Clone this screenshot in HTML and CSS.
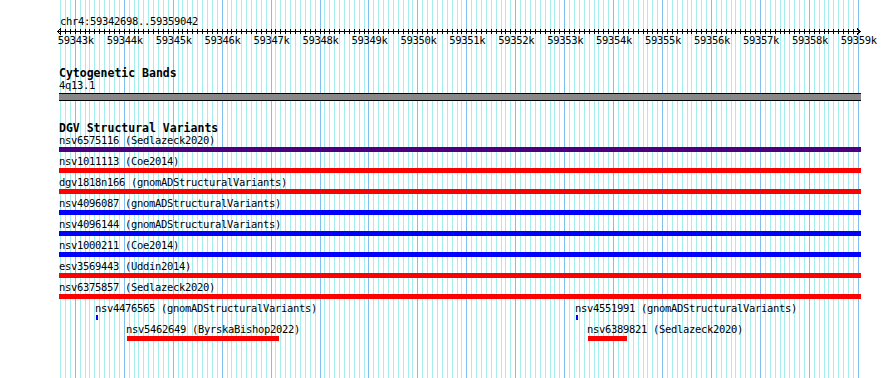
FILE: index.html
```html
<!DOCTYPE html>
<html lang="en">
<head>
<meta charset="utf-8">
<title>chr4:59342698..59359042</title>
<link rel="stylesheet" href="styles.css">
</head>
<body>
<div class="view">
  <svg class="grid" width="890" height="378" viewBox="0 0 890 378" aria-hidden="true">
    <defs>
      <path id="kb" d="M4.894 0V378M9.788 0V378M14.682 0V378M19.576 0V378M24.47 0V378M29.364 0V378M34.258 0V378M39.152 0V378M44.046 0V378"/>
    </defs>
    <g class="minor">
      <path d="M60.62 0V378M65.51 0V378M70.41 0V378"/>
      <use href="#kb" x="75.3"/>
      <use href="#kb" x="124.24"/>
      <use href="#kb" x="173.18"/>
      <use href="#kb" x="222.12"/>
      <use href="#kb" x="271.06"/>
      <use href="#kb" x="320"/>
      <use href="#kb" x="368.94"/>
      <use href="#kb" x="417.88"/>
      <use href="#kb" x="466.82"/>
      <use href="#kb" x="515.76"/>
      <use href="#kb" x="564.7"/>
      <use href="#kb" x="613.64"/>
      <use href="#kb" x="662.58"/>
      <use href="#kb" x="711.52"/>
      <use href="#kb" x="760.46"/>
      <use href="#kb" x="809.4"/>
    </g>
    <path class="major" d="M75.3 0V378M124.24 0V378M173.18 0V378M222.12 0V378M271.06 0V378M320 0V378M368.94 0V378M417.88 0V378M466.82 0V378M515.76 0V378M564.7 0V378M613.64 0V378M662.58 0V378M711.52 0V378M760.46 0V378M809.4 0V378M858.34 0V378"/>
  </svg>

  <svg class="ruler" width="890" height="50" viewBox="0 0 890 50">
    <defs>
      <path id="kbt" d="M0 29V34M4.894 29V34M9.788 29V34M14.682 29V34M19.576 29V34M24.47 29V34M29.364 29V34M34.258 29V34M39.152 29V34M44.046 29V34"/>
    </defs>
    <text class="pos" x="60" y="25">chr4:59342698..59359042</text>
    <g class="axis">
      <path d="M57 31.5H861"/>
      <path d="M61 28.5L57.5 31.5L61 34.5"/>
      <path d="M857 28.5L860.5 31.5L857 34.5"/>
      <path d="M60.62 29V34M65.51 29V34M70.41 29V34M858.34 29V34"/>
      <use href="#kbt" x="75.3"/>
      <use href="#kbt" x="124.24"/>
      <use href="#kbt" x="173.18"/>
      <use href="#kbt" x="222.12"/>
      <use href="#kbt" x="271.06"/>
      <use href="#kbt" x="320"/>
      <use href="#kbt" x="368.94"/>
      <use href="#kbt" x="417.88"/>
      <use href="#kbt" x="466.82"/>
      <use href="#kbt" x="515.76"/>
      <use href="#kbt" x="564.7"/>
      <use href="#kbt" x="613.64"/>
      <use href="#kbt" x="662.58"/>
      <use href="#kbt" x="711.52"/>
      <use href="#kbt" x="760.46"/>
      <use href="#kbt" x="809.4"/>
    </g>
    <g class="ticklabels">
      <text x="75.8" y="44">59343k</text>
      <text x="124.7" y="44">59344k</text>
      <text x="173.7" y="44">59345k</text>
      <text x="222.6" y="44">59346k</text>
      <text x="271.6" y="44">59347k</text>
      <text x="320.5" y="44">59348k</text>
      <text x="369.4" y="44">59349k</text>
      <text x="418.4" y="44">59350k</text>
      <text x="467.3" y="44">59351k</text>
      <text x="516.3" y="44">59352k</text>
      <text x="565.2" y="44">59353k</text>
      <text x="614.1" y="44">59354k</text>
      <text x="663.1" y="44">59355k</text>
      <text x="712" y="44">59356k</text>
      <text x="761" y="44">59357k</text>
      <text x="809.9" y="44">59358k</text>
      <text x="858.8" y="44">59359k</text>
    </g>
  </svg>

  <div class="tracks">
    <section class="track cyto">
      <div class="title">Cytogenetic Bands</div>
      <div class="band-label">4q13.1</div>
      <div class="band"></div>
    </section>

    <section class="track dgv">
      <div class="title">DGV Structural Variants</div>
      <div class="rows">
        <div class="feat"><div class="label">nsv6575116 (Sedlazeck2020)</div><div class="bar purple"></div></div>
        <div class="feat"><div class="label">nsv1011113 (Coe2014)</div><div class="bar red"></div></div>
        <div class="feat"><div class="label">dgv1818n166 (gnomADStructuralVariants)</div><div class="bar red"></div></div>
        <div class="feat"><div class="label">nsv4096087 (gnomADStructuralVariants)</div><div class="bar blue"></div></div>
        <div class="feat"><div class="label">nsv4096144 (gnomADStructuralVariants)</div><div class="bar blue"></div></div>
        <div class="feat"><div class="label">nsv1000211 (Coe2014)</div><div class="bar blue"></div></div>
        <div class="feat"><div class="label">esv3569443 (Uddin2014)</div><div class="bar red"></div></div>
        <div class="feat"><div class="label">nsv6375857 (Sedlazeck2020)</div><div class="bar red"></div></div>
        <div class="packed">
          <div class="pf" style="left:36px"><div class="label">nsv4476565 (gnomADStructuralVariants)</div><div class="pbar blue" style="width:2px"></div></div>
          <div class="pf" style="left:516px"><div class="label">nsv4551991 (gnomADStructuralVariants)</div><div class="pbar blue" style="width:2px"></div></div>
        </div>
        <div class="packed">
          <div class="pf" style="left:67px"><div class="label">nsv5462649 (ByrskaBishop2022)</div><div class="pbar red" style="width:152px"></div></div>
          <div class="pf" style="left:528px"><div class="label">nsv6389821 (Sedlazeck2020)</div><div class="pbar red" style="width:39px"></div></div>
        </div>
      </div>
    </section>
  </div>
</div>
</body>
</html>
```

FILE: styles.css
```css
html, body {
  margin: 0;
  padding: 0;
  background: #ffffff;
}

.view {
  position: relative;
  width: 890px;
  height: 378px;
  overflow: hidden;
  background: #ffffff;
  font-family: "DejaVu Sans Mono", "Liberation Mono", monospace;
  font-size: 10.5px;
  letter-spacing: -0.32px;
  color: #000000;
}

.grid {
  position: absolute;
  left: 0;
  top: 0;
  shape-rendering: crispEdges;
}

.grid .minor {
  stroke: #a6eeee;
  stroke-width: 1;
}

.grid .major {
  stroke: #80c0ee;
  stroke-width: 1;
}

.ruler {
  position: relative;
  display: block;
}

.ruler .axis {
  stroke: #000000;
  stroke-width: 1;
  fill: none;
  shape-rendering: crispEdges;
}

.ruler text {
  font-family: "DejaVu Sans Mono", "Liberation Mono", monospace;
  font-size: 10.5px;
  letter-spacing: -0.32px;
  fill: #000000;
}

.ruler .ticklabels text {
  text-anchor: middle;
}

.tracks {
  position: relative;
  padding-left: 59px;
}

.title {
  height: 12px;
  font-size: 11.5px;
  line-height: 12px;
  letter-spacing: 0;
  font-weight: bold;
  white-space: nowrap;
}

.cyto .title {
  margin-top: 17px;
}

.band-label {
  margin-top: 2px;
  height: 12px;
  line-height: 9px;
  white-space: nowrap;
}

.band {
  width: 802px;
  height: 6px;
  background: #888888;
  border-top: 1px solid #000000;
  border-bottom: 1px solid #000000;
}

.dgv .title {
  margin-top: 21px;
}

.rows {
  margin-top: 2px;
}

.feat {
  height: 21px;
}

.label {
  height: 11px;
  line-height: 9px;
  white-space: nowrap;
}

.bar {
  width: 802px;
  height: 5px;
}

.packed {
  position: relative;
  height: 21px;
}

.pf {
  position: absolute;
  top: 0;
}

.pbar {
  height: 5px;
  margin-left: 1px;
}

.purple { background: #4b0082; }
.red { background: #ff0000; }
.blue { background: #0000ff; }
```
